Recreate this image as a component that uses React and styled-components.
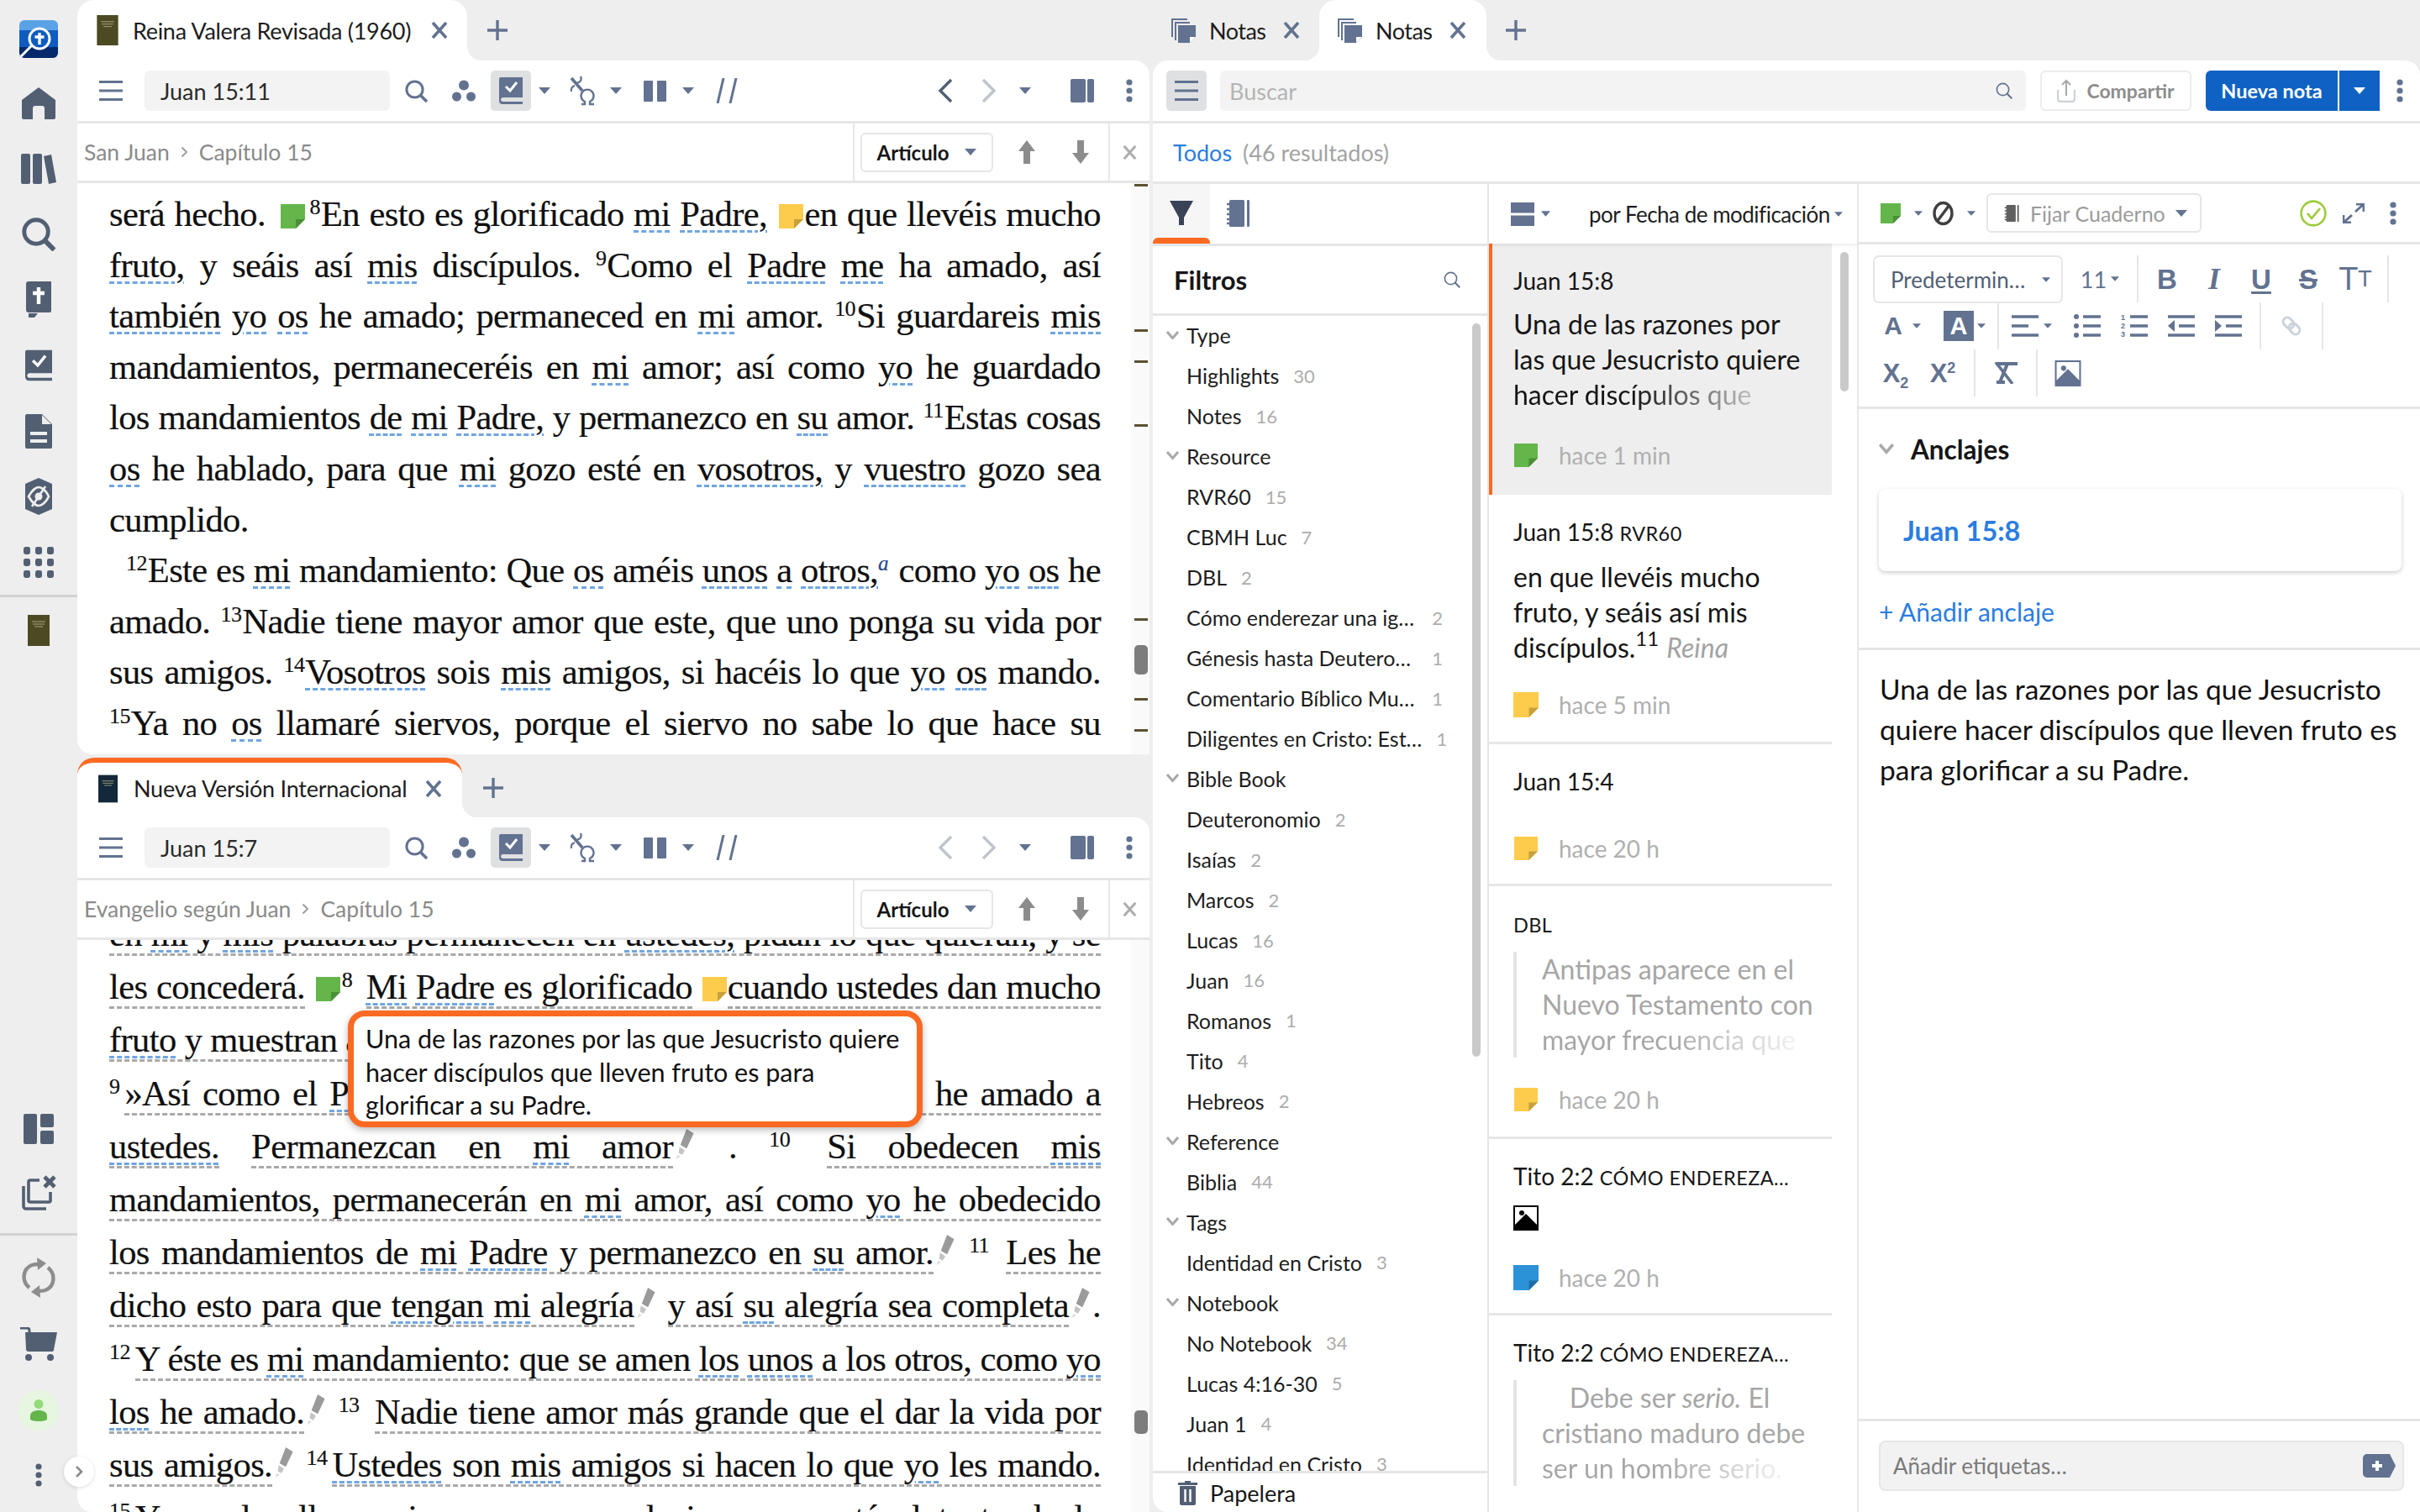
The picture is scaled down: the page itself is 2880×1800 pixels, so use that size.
import React from "react";
import styled, { createGlobalStyle } from "styled-components";

const UI = `Lato, "Noto Sans", "Liberation Sans", sans-serif`;
const SLATE = "#627290";
const NAVY = "#525f73";
const ORANGE = "#fb6a23";
const LINE = "#e6e6e6";
const BLUE = "#2a7de1";

const Global = createGlobalStyle`
  html, body { margin: 0; padding: 0; background: #eeeeee; }
  body { font-family: ${UI}; color: #161616; }
  * { box-sizing: border-box; }
  svg { display: block; flex: none; }
`;

const Shell = styled.div`
  width: 2880px;
  height: 1800px;
  display: flex;
  overflow: hidden;
  position: relative;
  background: #eeeeee;
`;

/* ---------- left rail ---------- */
const Rail = styled.nav`
  width: 92px;
  height: 1800px;
  flex: none;
  display: flex;
  flex-direction: column;
  align-items: center;
  padding-bottom: 6px;
`;
const LogoSlot = styled.div`
  height: 84px;
  padding-top: 24px;
`;
const RailItem = styled.div`
  height: ${(p) => p.$h || 78}px;
  width: 92px;
  display: flex;
  align-items: center;
  justify-content: center;
`;
const RailRule = styled.div`
  width: 92px;
  height: 3px;
  background: #d2d2d2;
  flex: none;
  margin: ${(p) => p.$mt || 0}px 0 ${(p) => p.$mb || 0}px;
`;
const RailSpacer = styled.div`
  flex: 1;
`;
const UserDot = styled.div`
  width: 48px;
  height: 48px;
  border-radius: 50%;
  background: #e6f6e0;
  display: flex;
  align-items: center;
  justify-content: center;
`;
const Collapse = styled.div`
  position: absolute;
  left: 76px;
  top: 1734px;
  width: 36px;
  height: 36px;
  border-radius: 50%;
  background: #fff;
  box-shadow: 0 1px 4px rgba(0, 0, 0, 0.14);
  display: flex;
  align-items: center;
  justify-content: center;
  z-index: 5;
`;

/* ---------- tabs ---------- */
const Column = styled.div`
  width: ${(p) => p.$w}px;
  flex: none;
  display: flex;
  flex-direction: column;
  height: 1800px;
  margin-right: ${(p) => p.$mr || 0}px;
`;
const Pane = styled.section`
  display: flex;
  flex-direction: column;
  height: ${(p) => p.$h}px;
  margin-top: ${(p) => p.$mt || 0}px;
  overflow: hidden;
`;
const TabStrip = styled.div`
  height: ${(p) => p.$h || 72}px;
  flex: none;
  display: flex;
  align-items: flex-end;
`;
const Tab = styled.div`
  height: ${(p) => p.$h || 72}px;
  display: flex;
  align-items: center;
  position: relative;
  padding-left: ${(p) => p.$pl || 23}px;
  width: ${(p) => p.$w}px;
  flex: none;
  font-size: 27px;
  color: #1d1d1d;
  border-radius: 20px 20px 0 0;
  background: ${(p) => (p.$on ? "#fff" : "transparent")};
  ${(p) => p.$accent && `border-top: 6px solid ${ORANGE}; padding-bottom: 4px;`}
  ${(p) =>
    p.$on &&
    `&::after {
      content: "";
      position: absolute;
      right: -18px;
      bottom: 0;
      width: 18px;
      height: 18px;
      background: radial-gradient(circle at 100% 0, transparent 18px, #fff 18.5px);
    }`}
  ${(p) =>
    p.$on &&
    p.$inner &&
    `&::before {
      content: "";
      position: absolute;
      left: -18px;
      bottom: 0;
      width: 18px;
      height: 18px;
      background: radial-gradient(circle at 0 0, transparent 18px, #fff 18.5px);
    }`}
`;
const TabLabel = styled.span`
  margin-left: ${(p) => p.$ml || 17}px;
  white-space: nowrap;
  letter-spacing: ${(p) => p.$ls || 0}px;
`;
const TabClose = styled.span`
  margin-left: ${(p) => p.$ml || 22}px;
  display: flex;
`;
const TabAdd = styled.span`
  margin-left: ${(p) => p.$ml || 23}px;
  align-self: center;
  display: flex;
`;
const Sheet = styled.div`
  flex: 1;
  min-height: 0;
  background: #fff;
  display: flex;
  flex-direction: column;
  border-radius: ${(p) => p.$radius || "0 18px 0 0"};
  position: relative;
`;

/* ---------- toolbars ---------- */
const Toolbar = styled.div`
  height: 75px;
  flex: none;
  display: flex;
  align-items: center;
  padding: 0 20px 0 ${(p) => p.$pl || 26}px;
  border-bottom: 3px solid ${LINE};
`;
const Slot = styled.div`
  flex: none;
  display: flex;
  align-items: center;
  justify-content: center;
  width: ${(p) => p.$w}px;
  height: 48px;
  margin-left: ${(p) => p.$ml || 0}px;
  ${(p) => p.$auto && "margin-left: auto;"}
  ${(p) => p.$on && "background: #dfe0e2; border-radius: 5px;"}
`;
const RefField = styled.div`
  width: 292px;
  height: 48px;
  margin-left: 26px;
  padding-left: 19px;
  border-radius: 6px;
  background: #f3f3f3;
  display: flex;
  align-items: center;
  font-size: 27px;
  color: #2a2a2a;
`;
const CrumbBar = styled.div`
  height: 71px;
  flex: none;
  display: flex;
  align-items: stretch;
  padding-left: 8px;
  border-bottom: 3px solid ${LINE};
  font-size: 26.5px;
  color: #8a8a8a;
`;
const Crumbs = styled.div`
  flex: 1;
  display: flex;
  align-items: center;
  gap: 13px;
`;
const CrumbTools = styled.div`
  display: flex;
  align-items: center;
  border-left: 2px solid ${LINE};
  padding-left: 7px;
  width: 353px;
`;
const ModeSelect = styled.div`
  width: 158px;
  height: 47px;
  border: 2px solid ${LINE};
  border-radius: 6px;
  display: flex;
  align-items: center;
  justify-content: center;
  gap: 19px;
  font-size: 24px;
  font-weight: 700;
  color: #161616;
`;
const CrumbClose = styled.div`
  width: 49px;
  align-self: stretch;
  margin-left: auto;
  border-left: 2px solid ${LINE};
  display: flex;
  align-items: center;
  justify-content: center;
`;

/* ---------- bible text ---------- */
const Reader = styled.div`
  flex: 1;
  min-height: 0;
  overflow: hidden;
  position: relative;
  padding: ${(p) => p.$top}px 0 0 38px;
`;
const TextFlow = styled.div`
  width: 1180px;
  margin-top: ${(p) => p.$mt || 0}px;
  font-family: "Liberation Serif", "Times New Roman", serif;
  font-size: 42.5px;
  letter-spacing: -0.6px;
  -webkit-text-stroke: 0.2px #101010;
  line-height: ${(p) => p.$lh}px;
  color: #101010;
`;
const Line = styled.div`
  height: ${(p) => p.$lh}px;
  overflow: visible;
  text-align: justify;
  text-align-last: ${(p) => (p.$free ? "left" : "justify")};
  text-indent: ${(p) => p.$indent || 0}px;
`;
const Ref = styled.span`
  text-decoration: underline dashed #6fa5e2 3px;
  text-underline-offset: 5px;
`;
const Marked = styled.span`
  border-bottom: 3px dashed #a9a9a9;
`;
const Verse = styled.sup`
  font-size: ${(p) => p.$s || 26}px;
  line-height: 0;
  vertical-align: 14px;
  margin-right: ${(p) => p.$mr || 1}px;
`;
const Foot = styled.sup`
  font-size: 25px;
  line-height: 0;
  vertical-align: 14px;
  font-style: italic;
  color: #1f4fa0;
  margin-right: 2px;
`;
const InlineIcon = styled.span`
  display: inline-block;
  vertical-align: ${(p) => p.$va || -3}px;
  margin: 0 ${(p) => p.$mx || 6}px;
  text-indent: 0;
`;
const ScrollTrack = styled.div`
  position: absolute;
  right: 0;
  top: 0;
  bottom: 0;
  width: 22px;
  background: #fafafa;
`;
const Tick = styled.div`
  position: absolute;
  left: 4px;
  right: 2px;
  top: ${(p) => p.$y}px;
  height: ${(p) => p.$hh || 3}px;
  background: ${(p) => p.$c || "#5b5232"};
  border-radius: ${(p) => (p.$hh ? 5 : 0)}px;
`;
const Tooltip = styled.div`
  position: absolute;
  left: 322px;
  top: 84px;
  width: 684px;
  height: 139px;
  border: 7px solid ${ORANGE};
  border-radius: 20px;
  background: #fff;
  box-shadow: 0 3px 8px rgba(0, 0, 0, 0.28);
  padding: 7px 0 0 14px;
  font-family: ${UI};
  font-size: 30.500px;
  line-height: 39.5px;
  color: #111;
  overflow: hidden;
  white-space: nowrap;
`;

/* ---------- notes ---------- */
const SearchField = styled.div`
  width: 959px;
  height: 48px;
  margin-left: 16px;
  border-radius: 6px;
  background: #f3f3f3;
  padding: 0 16px 0 11px;
  display: flex;
  align-items: center;
  justify-content: space-between;
  font-size: 27px;
  color: #b4b4b4;
`;
const ShareButton = styled.div`
  width: 180px;
  height: 48px;
  margin-left: 17px;
  border: 2px solid #ececec;
  border-radius: 6px;
  display: flex;
  align-items: center;
  justify-content: center;
  gap: 13px;
  font-size: 23px;
  font-weight: 700;
  color: #8d8d8d;
`;
const NewNote = styled.div`
  height: 48px;
  margin-left: 17px;
  display: flex;
  gap: 2px;
  background: #fff;
`;
const NewNoteMain = styled.div`
  width: 157px;
  background: #0f62c4;
  border-radius: 6px 0 0 6px;
  color: #fff;
  font-size: 23.5px;
  font-weight: 700;
  display: flex;
  align-items: center;
  justify-content: center;
`;
const NewNoteMore = styled.div`
  width: 48px;
  background: #0f62c4;
  display: flex;
  align-items: center;
  justify-content: center;
`;
const ResultsBar = styled.div`
  height: 72px;
  flex: none;
  display: flex;
  align-items: center;
  gap: 13px;
  padding-left: 24px;
  border-bottom: 3px solid ${LINE};
  font-size: 27px;
  color: #a3a3a3;
`;
const TodosLink = styled.span`
  color: ${BLUE};
`;
const Columns = styled.div`
  flex: 1;
  min-height: 0;
  display: flex;
`;
const FilterCol = styled.div`
  width: 400px;
  flex: none;
  display: flex;
  flex-direction: column;
  border-right: 2px solid ${LINE};
  position: relative;
`;
const FilterTabs = styled.div`
  height: 74px;
  flex: none;
  display: flex;
  border-bottom: 3px solid ${LINE};
`;
const FilterTab = styled.div`
  width: 68px;
  display: flex;
  align-items: center;
  justify-content: center;
  position: relative;
  padding-bottom: 2px;
  ${(p) =>
    p.$on &&
    `background: #f6f6f6;
    &::after {
      content: "";
      position: absolute;
      left: 0;
      right: 0;
      bottom: 0;
      height: 7px;
      background: ${ORANGE};
      border-radius: 6px 6px 0 0;
    }`}
`;
const FilterHead = styled.div`
  height: 82.500px;
  flex: none;
  display: flex;
  align-items: center;
  justify-content: space-between;
  padding: 0 32px 0 25px;
  font-size: 31px;
  font-weight: 700;
  border-bottom: 3px solid ${LINE};
`;
const FilterList = styled.div`
  flex: 1;
  min-height: 0;
  overflow: hidden;
  position: relative;
`;
const FilterRow = styled.div`
  height: 47.98px;
  display: flex;
  align-items: center;
  padding-left: 40px;
  padding-right: ${(p) => (p.$fill ? 53 : 0)}px;
  position: relative;
  font-size: 25px;
  color: #1d1d1d;
  white-space: nowrap;
`;
const FilterName = styled.span`
  ${(p) => p.$fill && "flex: 1;"}
`;
const FilterCount = styled.span`
  margin-left: 17px;
  font-size: 22px;
  color: #acacac;
`;
const Chevron = styled.span`
  position: absolute;
  left: 16px;
  top: 18px;
  display: flex;
`;
const ThinBar = styled.div`
  position: absolute;
  left: ${(p) => p.$x}px;
  top: ${(p) => p.$y}px;
  width: 10px;
  height: ${(p) => p.$h}px;
  border-radius: 5px;
  background: #c9c9c9;
`;
const TrashRow = styled.div`
  height: 49px;
  flex: none;
  display: flex;
  align-items: center;
  gap: 15px;
  padding-left: 30px;
  border-top: 3px solid ${LINE};
  font-size: 27px;
`;
const ListCol = styled.div`
  width: 440px;
  flex: none;
  display: flex;
  flex-direction: column;
  border-right: 2px solid ${LINE};
  position: relative;
  overflow: hidden;
`;
const SortBar = styled.div`
  height: 71px;
  flex: none;
  display: flex;
  align-items: center;
  padding-left: 26px;
  font-size: 26px;
  color: #1d1d1d;
  position: relative;
  z-index: 2;
  box-shadow: 0 2px 4px rgba(0, 0, 0, 0.08);
  white-space: nowrap;
`;
const SortLabel = styled.span`
  margin-left: 46px;
  letter-spacing: -0.5px;
`;
const NoteList = styled.div`
  width: 408px;
  flex: 1;
  min-height: 0;
  overflow: hidden;
`;
const NoteCard = styled.article`
  height: ${(p) => p.$h}px;
  display: flex;
  flex-direction: column;
  padding: 26px 0 0 ${(p) => (p.$on ? 25 : 29)}px;
  ${(p) =>
    p.$on
      ? `background: #eeeeee; border-left: 4px solid ${ORANGE};`
      : `border-bottom: 3px solid ${LINE};`}
`;
const NoteTitle = styled.div`
  font-size: 28px;
  line-height: 36px;
  white-space: nowrap;
  color: #161616;
`;
const Source = styled.span`
  font-size: 23.5px;
  letter-spacing: 0.4px;
  margin-left: ${(p) => (p.$flush ? 0 : 7)}px;
`;
const NoteBody = styled.div`
  margin-top: 13px;
  font-size: 32px;
  line-height: 42px;
  white-space: nowrap;
  color: #151515;
`;
const Fade = styled.span`
  background: linear-gradient(90deg, ${(p) => p.$from || "#151515"} 50%, ${(p) => p.$to || "#bdbdbd"} 100%);
  -webkit-background-clip: text;
  background-clip: text;
  color: transparent;
`;
const Quote = styled.blockquote`
  margin: ${(p) => p.$mt || 13}px 0 0 0;
  padding-left: 30px;
  border-left: 4px solid #e4e4e4;
  font-size: 32px;
  line-height: 42px;
  white-space: nowrap;
  color: #a6a6a6;
`;
const Faint = styled.i`
  color: #a6a6a6;
`;
const Ghost = styled.i`
  color: #a3a3a3;
`;
const NoteMeta = styled.div`
  margin-top: auto;
  margin-bottom: ${(p) => p.$mb || 27}px;
  display: flex;
  align-items: center;
  gap: 24px;
  font-size: 28px;
  color: #b0b0b0;
`;
const NotePicture = styled.div`
  margin-top: 15px;
`;

/* ---------- editor ---------- */
const Editor = styled.div`
  flex: 1;
  display: flex;
  flex-direction: column;
  min-width: 0;
`;
const MetaBar = styled.div`
  height: 72px;
  flex: none;
  display: flex;
  align-items: center;
  padding-left: 26px;
  border-bottom: 3px solid ${LINE};
`;
const Cell = styled.div`
  flex: none;
  width: ${(p) => p.$w}px;
  height: 100%;
  margin-left: ${(p) => p.$ml || 0}px;
  ${(p) => p.$auto && "margin-left: auto;"}
  display: flex;
  align-items: center;
  justify-content: center;
  gap: ${(p) => p.$gap || 0}px;
  font-family: "Liberation Sans", Arial, sans-serif;
  color: ${SLATE};
`;
const NotebookSelect = styled.div`
  width: 256px;
  height: 47px;
  margin-left: 13px;
  border: 2px solid ${LINE};
  border-radius: 6px;
  display: flex;
  align-items: center;
  padding: 0 15px 0 19px;
  font-size: 25px;
  color: #9b9b9b;
`;
const NotebookText = styled.span`
  flex: 1;
  margin-left: 12px;
`;
const FormatBox = styled.div`
  height: 196px;
  flex: none;
  padding-top: 13px;
  padding-left: 17px;
  border-bottom: 3px solid ${LINE};
`;
const FormatRow = styled.div`
  height: 56px;
  display: flex;
  align-items: stretch;
`;
const FontSelect = styled.div`
  width: 226px;
  height: 57px;
  border: 2px solid ${LINE};
  border-radius: 7px;
  display: flex;
  align-items: center;
  justify-content: space-between;
  padding: 0 13px 0 19px;
  font-size: 26px;
  color: ${NAVY};
`;
const VRule = styled.div`
  width: 2px;
  flex: none;
  background: ${LINE};
  margin-left: ${(p) => p.$ml || 0}px;
`;
const Glyph = styled.span`
  font-family: ${(p) => (p.$ui ? UI : p.$serif ? `"Liberation Serif", serif` : "inherit")};
  font-size: ${(p) => p.$s || 33}px;
  font-weight: ${(p) => (p.$thin ? 400 : 700)};
  font-style: ${(p) => (p.$it ? "italic" : "normal")};
  text-decoration: ${(p) => p.$deco || "none"};
  color: ${SLATE};
  line-height: 1;
  text-underline-offset: 3px;
`;
const HighlightA = styled.span`
  width: 36px;
  height: 36px;
  background: ${SLATE};
  color: #fff;
  font-size: 29px;
  font-weight: 700;
  display: flex;
  align-items: center;
  justify-content: center;
`;
const Sub = styled.sub`
  font-size: 18px;
  line-height: 0;
`;
const Top = styled.sup`
  font-size: 18px;
  line-height: 0;
`;
const AnchorBox = styled.div`
  height: 287px;
  flex: none;
  padding: 0 22px 0 24px;
  border-bottom: 3px solid ${LINE};
`;
const AnchorHead = styled.div`
  height: 95px;
  display: flex;
  align-items: center;
  gap: 20px;
  font-size: 31.500px;
  font-weight: 700;
`;
const AnchorCard = styled.div`
  height: 98px;
  border-radius: 8px;
  background: #fff;
  box-shadow: 0 2px 5px rgba(0, 0, 0, 0.2);
  padding-left: 29px;
  display: flex;
  align-items: center;
  font-size: 32.500px;
  font-weight: 700;
  color: ${BLUE};
`;
const AddAnchor = styled.div`
  margin-top: 30px;
  font-size: 30px;
  color: ${BLUE};
`;
const NoteText = styled.div`
  flex: 1;
  padding: 22px 0 0 25px;
  font-size: 33.500px;
  line-height: 48px;
  white-space: nowrap;
  color: #111;
`;
const TagFooter = styled.div`
  height: 111px;
  flex: none;
  padding: 23px 19px 0 24px;
  border-top: 3px solid ${LINE};
`;
const TagInput = styled.div`
  height: 60px;
  border: 2px solid ${LINE};
  border-radius: 8px;
  background: #f2f2f2;
  display: flex;
  align-items: center;
  justify-content: space-between;
  padding: 0 8px 0 15px;
  font-size: 26px;
  color: #7a7a7a;
`;

/* ---------- icons ---------- */
const Caret = ({ w = 14, h = 8, c = SLATE }) => (
  <svg width={w} height={h} viewBox="0 0 14 8">
    <path d="M0 0h14L7 8z" fill={c} />
  </svg>
);
const Close = ({ s = 20, c = SLATE }) => (
  <svg width={s} height={s} viewBox="0 0 20 20">
    <path d="M2 1l16 18M18 1L2 19" stroke={c} strokeWidth="3.6" />
  </svg>
);
const Plus = () => (
  <svg width="26" height="26" viewBox="0 0 26 26">
    <path d="M13 1v24M1 13h24" stroke={SLATE} strokeWidth="3.4" />
  </svg>
);
const Menu = () => (
  <svg width="28" height="24" viewBox="0 0 28 24">
    <path d="M0 1.5h28M0 12h28M0 22.5h28" stroke={SLATE} strokeWidth="3.2" />
  </svg>
);
const SearchIcon = ({ s = 27, c = SLATE, sw = 3 }) => (
  <svg width={s} height={s} viewBox="0 0 27 27">
    <circle cx="11.5" cy="11.5" r="9.6" fill="none" stroke={c} strokeWidth={sw} />
    <path d="M18 18l8 8" stroke={c} strokeWidth={sw + 0.6} />
  </svg>
);
const People = () => (
  <svg width="28" height="27" viewBox="0 0 28 27">
    <circle cx="14" cy="6.5" r="6" fill={SLATE} />
    <circle cx="5.5" cy="20" r="5.5" fill={SLATE} />
    <circle cx="22.5" cy="20" r="5.5" fill={SLATE} />
  </svg>
);
const CheckBook = ({ c = SLATE, w = 28, h = 32 }) => (
  <svg width={w} height={h} viewBox="0 0 28 32">
    <path d="M2 0h26v24H5a3 3 0 0 0-3 2 3 3 0 0 0 3 3h23v3H4a4 4 0 0 1-4-4V2a2 2 0 0 1 2-2z" fill={c} />
    <path d="M8 11l5 5 8-10" fill="none" stroke="#fff" strokeWidth="3" />
  </svg>
);
const Interlinear = () => (
  <svg width="32" height="36" viewBox="0 0 32 36">
    <g fill="none" stroke={SLATE}>
      <path d="M3 3l13 15" strokeWidth="3.6" />
      <path d="M14 1c2 5-1 7-5 8" strokeWidth="2.2" />
      <path d="M3 19c-1-4 1-6 4-7" strokeWidth="2.2" />
      <path d="M15 34h4v-3a7.500 7.500 0 1 1 6 0v3h5" strokeWidth="2.4" />
    </g>
  </svg>
);
const ColumnsIcon = () => (
  <svg width="27" height="25" viewBox="0 0 27 25">
    <rect width="11" height="25" rx="1" fill={SLATE} />
    <rect x="16" width="11" height="25" rx="1" fill={SLATE} />
  </svg>
);
const Slashes = () => (
  <svg width="26" height="30" viewBox="0 0 26 30">
    <path d="M9 0L2 30M24 0L17 30" stroke={SLATE} strokeWidth="3" />
  </svg>
);
const Angle = ({ dir = "left", c = NAVY }) => (
  <svg width="18" height="30" viewBox="0 0 18 30">
    <path d={dir === "left" ? "M16 2L3 15l13 13" : "M2 2l13 13L2 28"} fill="none" stroke={c} strokeWidth="3.4" />
  </svg>
);
const Split = () => (
  <svg width="28" height="28" viewBox="0 0 28 28">
    <rect width="18" height="28" rx="2" fill={SLATE} />
    <rect x="20" width="8" height="28" rx="2" fill={SLATE} />
  </svg>
);
const Kebab = ({ c = SLATE, h = 28 }) => (
  <svg width="8" height={h} viewBox="0 0 8 28">
    <circle cx="4" cy="4" r="3.6" fill={c} />
    <circle cx="4" cy="14" r="3.6" fill={c} />
    <circle cx="4" cy="24" r="3.6" fill={c} />
  </svg>
);
const Arrow = ({ up }) => (
  <svg width="20" height="28" viewBox="0 0 20 28">
    <path d={up ? "M10 0l10 13h-6v15H6V13H0z" : "M10 28L0 15h6V0h8v15h6z"} fill="#8c8c8c" />
  </svg>
);
const StickyNote = ({ c, fold, w = 29, h = 29 }) => (
  <svg width={w} height={h} viewBox="0 0 29 29">
    <path d="M0 0h29v18L18 29H0z" fill={c} />
    <path d="M29 18H18v11z" fill={fold} />
  </svg>
);
const green = { c: "#64b64b", fold: "#4a8f36" };
const yellow = { c: "#fdcc4c", fold: "#c7a13a" };
const azure = { c: "#2c92d8", fold: "#1e6ea6" };
const Pen = () => (
  <svg width="24" height="38" viewBox="0 0 22 36">
    <path d="M13 1l8 5-8 17-7-4z" fill="#9a9a9a" />
    <path d="M5 21l6 4-3 5-4-2z" fill="#c4c4c4" />
    <path d="M3 30l3 2-5 3z" fill="#dadada" />
  </svg>
);
const BookThumb = ({ c = "#4b4a23", w = 26, h = 37 }) => (
  <svg width={w} height={h} viewBox="0 0 26 37">
    <rect width="26" height="37" fill={c} />
    <path d="M5 8h16M6 11h14M8 14h10" stroke="#b5b28a" strokeWidth="0.9" />
  </svg>
);
const NotesTabIcon = () => (
  <svg width="29" height="29" viewBox="0 0 29 29">
    <path d="M0 0h19v2H2v20H0zM4 4h18v2H6v20H4z" fill={SLATE} />
    <path d="M8 8h21v14l-7 7H8z" fill={SLATE} />
    <path d="M29 22h-7v7z" fill="#fff" />
  </svg>
);
const Funnel = () => (
  <svg width="28" height="29" viewBox="0 0 28 29">
    <path d="M0 0h28l-11 20v9h-6v-9z" fill="#3a4356" />
  </svg>
);
const Notebook = ({ c = SLATE, w = 28, h = 32 }) => (
  <svg width={w} height={h} viewBox="0 0 28 32">
    <rect x="3" width="18" height="32" rx="1.5" fill={c} />
    <rect x="24" width="3" height="32" rx="1" fill={c} />
    <path d="M0 5h5M0 11h5M0 17h5M0 23h5M0 28h5" stroke={c} strokeWidth="2.4" />
  </svg>
);
const Chev = ({ s = 15, c = "#a9a9a9", sw = 3 }) => (
  <svg width={s} height={s * 0.7} viewBox="0 0 15 10.5">
    <path d="M1 1l6.5 7.5L14 1" fill="none" stroke={c} strokeWidth={sw} />
  </svg>
);
const Rows = () => (
  <svg width="28" height="28" viewBox="0 0 28 28">
    <rect width="28" height="12.5" fill={SLATE} />
    <rect y="15.5" width="28" height="12.5" fill={SLATE} />
  </svg>
);
const Trash = () => (
  <svg width="23" height="29" viewBox="0 0 23 29">
    <path d="M8 0h7v2h8v3H0V2h8zM2 6h19v21a2 2 0 0 1-2 2H4a2 2 0 0 1-2-2z" fill={NAVY} />
    <path d="M8.5 10v15M14.5 10v15" stroke="#fff" strokeWidth="2.4" />
  </svg>
);
const PictureIcon = ({ c = "#000", w = 30, h = 30 }) => (
  <svg width={w} height={h} viewBox="0 0 30 30">
    <rect x="1" y="1" width="28" height="28" fill="#fff" stroke={c} strokeWidth="2" />
    <circle cx="10" cy="9" r="3" fill={c} />
    <path d="M1 29V24L15 10l14 14v5z" fill={c} />
  </svg>
);
const Upload = () => (
  <svg width="22" height="28" viewBox="0 0 22 28">
    <path d="M11 20V2M6 7l5-5 5 5" fill="none" stroke="#a8a8a8" strokeWidth="2" />
    <path d="M1 13v11a3 3 0 0 0 3 3h14a3 3 0 0 0 3-3V13" fill="none" stroke="#ccd1d9" strokeWidth="2.4" />
  </svg>
);
const NoSign = () => (
  <svg width="25" height="30" viewBox="0 0 25 30">
    <ellipse cx="12.5" cy="15" rx="10.5" ry="12.5" fill="none" stroke="#3f3f3f" strokeWidth="3.4" />
    <path d="M5 25L20 5" stroke="#3f3f3f" strokeWidth="3.4" />
  </svg>
);
const SavedCheck = () => (
  <svg width="32" height="32" viewBox="0 0 32 32">
    <circle cx="16" cy="16" r="14.4" fill="none" stroke="#9ccb3b" strokeWidth="2.6" />
    <path d="M9 16l5 6 10-12" fill="none" stroke="#9ccb3b" strokeWidth="2.6" />
  </svg>
);
const Expand = () => (
  <svg width="26" height="24" viewBox="0 0 26 24">
    <path d="M16 1h9v9M25 1L15 10M10 23H1v-9M1 23l10-9" fill="none" stroke={SLATE} strokeWidth="2.8" />
  </svg>
);
const ListLines = ({ bullets, numbers }) => (
  <svg width="32" height="30" viewBox="0 0 32 30">
    {bullets &&
      [4, 15, 26].map((y) => <circle key={y} cx="3" cy={y} r="3" fill={SLATE} />)}
    {numbers && (
      <g fontFamily="Liberation Sans" fontSize="9" fontWeight="700" fill={SLATE}>
        <text x="0" y="8">1</text>
        <text x="0" y="18">2</text>
        <text x="0" y="28">3</text>
      </g>
    )}
    <path d="M11 4h21M11 15h21M11 26h21" stroke={SLATE} strokeWidth="3.6" />
  </svg>
);
const AlignLines = () => (
  <svg width="32" height="28" viewBox="0 0 32 28">
    <path d="M0 3h32M0 14h20M0 25h32" stroke={SLATE} strokeWidth="3.6" />
  </svg>
);
const Indent = ({ out }) => (
  <svg width="32" height="28" viewBox="0 0 32 28">
    <path d="M0 3h32M0 25h32M13 14h19" stroke={SLATE} strokeWidth="3.6" />
    <path d={out ? "M0 14l8-7v14z" : "M8 14L0 7v14z"} fill={SLATE} />
  </svg>
);
const LinkIcon = () => (
  <svg width="26" height="26" viewBox="0 0 26 26">
    <g fill="none" stroke="#ccd2dc" strokeWidth="3" transform="rotate(-45 13 13)">
      <rect x="8" y="1" width="10" height="14" rx="5" />
      <rect x="8" y="11" width="10" height="14" rx="5" />
    </g>
  </svg>
);
const ClearFormat = () => (
  <svg width="30" height="26" viewBox="0 0 30 26">
    <path d="M3 2h26" stroke={SLATE} strokeWidth="4" />
    <path d="M3 0l20 26" stroke={SLATE} strokeWidth="3.6" />
    <path d="M17 2L8 24M4 24h10" stroke={SLATE} strokeWidth="4" fill="none" />
  </svg>
);
const TagAdd = () => (
  <svg width="39" height="28" viewBox="0 0 39 28">
    <path d="M5 0h27l7 14-7 14H5a5 5 0 0 1-5-5V5a5 5 0 0 1 5-5z" fill={SLATE} />
    <path d="M17 8v12M11 14h12" stroke="#fff" strokeWidth="4" />
  </svg>
);

const Logo = () => (
  <svg width="46" height="45" viewBox="0 0 46 45">
    <defs>
      <clipPath id="logoClip">
        <rect width="46" height="45" rx="6" />
      </clipPath>
    </defs>
    <g clipPath="url(#logoClip)">
      <rect width="46" height="12" fill="#5aa2e6" />
      <rect y="12" width="46" height="20" fill="#0e5cc0" />
      <rect y="32" width="46" height="13" fill="#04286c" />
      <path d="M15 30L1 44" stroke="#fff" strokeWidth="3" />
    </g>
    <circle cx="24" cy="22" r="12" fill="#0e5cc0" stroke="#fff" strokeWidth="3" />
    <path d="M24 15v14M18.5 20h11" stroke="#fff" strokeWidth="3.4" />
  </svg>
);
const HomeIcon = () => (
  <svg width="40" height="38" viewBox="0 0 40 38">
    <path d="M20 0l20 15v21a2 2 0 0 1-2 2H27V25a3 3 0 0 0-3-3h-8a3 3 0 0 0-3 3v13H2a2 2 0 0 1-2-2V15z" fill={NAVY} />
  </svg>
);
const LibraryIcon = () => (
  <svg width="42" height="37" viewBox="0 0 42 37">
    <rect width="11" height="36" rx="2" fill={NAVY} />
    <rect x="14" width="11" height="36" rx="2" fill={NAVY} />
    <path d="M27 3l9-2 6 33-9 2z" fill={NAVY} />
  </svg>
);
const BiblePlus = () => (
  <svg width="30" height="44" viewBox="0 0 30 44">
    <path d="M3 0h27v35a2 2 0 0 1-2 2H3a3 3 0 0 1-3-3V3a3 3 0 0 1 3-3z" fill={NAVY} />
    <path d="M3 38h11l-4 5H3z" fill={NAVY} />
    <path d="M15 7v20M8 14h14" stroke="#fff" strokeWidth="4.4" />
  </svg>
);
const DocIcon = () => (
  <svg width="32" height="41" viewBox="0 0 32 41">
    <path d="M2 0h18l12 12v27a2 2 0 0 1-2 2H2a2 2 0 0 1-2-2V2a2 2 0 0 1 2-2z" fill={NAVY} />
    <path d="M20 1v11h11z" fill="#eee" />
    <path d="M6 23h20M6 32h20" stroke="#eee" strokeWidth="4" />
  </svg>
);
const HexEye = () => (
  <svg width="32" height="44" viewBox="0 0 32 44">
    <path d="M16 0l16 7v30l-16 7-16-7V7z" fill={NAVY} />
    <path d="M4 22c5-9 10-11 12-11s8 2 12 11c-4 9-10 11-12 11s-7-2-12-11z" fill="none" stroke="#eee" strokeWidth="2.6" />
    <circle cx="16" cy="22" r="4.5" fill="#eee" />
    <path d="M24 10L8 34" stroke="#eee" strokeWidth="2.6" />
  </svg>
);
const DotGrid = () => (
  <svg width="36" height="37" viewBox="0 0 36 37">
    {[0, 14, 28].map((y) =>
      [0, 14, 28].map((x) => <rect key={`${x}-${y}`} x={x} y={y} width="8" height="9" rx="2.4" fill={NAVY} />)
    )}
  </svg>
);
const LayoutIcon = () => (
  <svg width="36" height="36" viewBox="0 0 36 36">
    <rect width="16" height="36" rx="2" fill={NAVY} />
    <rect x="20" width="16" height="16" rx="2" fill={NAVY} />
    <rect x="20" y="20" width="16" height="16" rx="2" fill={NAVY} />
  </svg>
);
const CloseAll = () => (
  <svg width="42" height="42" viewBox="0 0 42 42">
    <path d="M22 6H11a2 2 0 0 0-2 2v22a2 2 0 0 0 2 2h22a2 2 0 0 0 2-2V20" fill="none" stroke={NAVY} strokeWidth="3.6" />
    <path d="M3 13v24a3 3 0 0 0 3 3h24" fill="none" stroke={NAVY} strokeWidth="3.6" />
    <path d="M28 2l12 12M40 2L28 14" stroke={NAVY} strokeWidth="4.6" />
  </svg>
);
const SyncIcon = () => (
  <svg width="40" height="48" viewBox="0 0 40 48">
    <path d="M9 36C0 29 0 14 12 9c3-1 7-1 9-1" fill="none" stroke="#8d8d8d" strokeWidth="4.4" />
    <path d="M18 0l11 7-10 8z" fill="#8d8d8d" />
    <path d="M31 12c9 7 9 22-3 27-3 1-7 1-9 1" fill="none" stroke="#8d8d8d" strokeWidth="4.4" />
    <path d="M22 48l-11-7 10-8z" fill="#8d8d8d" />
  </svg>
);
const CartIcon = () => (
  <svg width="44" height="40" viewBox="0 0 44 40">
    <path d="M0 1h8c2 0 3 1 3 3v2" fill="none" stroke={NAVY} strokeWidth="3" />
    <path d="M6 6h38l-4 21a2 2 0 0 1-2 2H10a3 3 0 0 1-3-3z" fill={NAVY} />
    <circle cx="10" cy="36" r="4" fill={NAVY} />
    <circle cx="36" cy="36" r="4" fill={NAVY} />
  </svg>
);
const UserIcon = () => (
  <svg width="20" height="26" viewBox="0 0 20 26">
    <circle cx="10" cy="5.5" r="5.5" fill="#92da7a" />
    <path d="M0 20c0-5 4-7 10-7s10 2 10 7v3c0 2-4 3-10 3S0 25 0 23z" fill="#64b64b" />
  </svg>
);

/* ---------- data ---------- */
const filters = [
  ["Type"], ["Highlights", 30], ["Notes", 16],
  ["Resource"], ["RVR60", 15], ["CBMH Luc", 7], ["DBL", 2],
  ["Cómo enderezar una ig…", 2, true], ["Génesis hasta Deutero…", 1, true],
  ["Comentario Bíblico Mu…", 1, true], ["Diligentes en Cristo: Est…", 1, true],
  ["Bible Book"], ["Deuteronomio", 2], ["Isaías", 2], ["Marcos", 2], ["Lucas", 16],
  ["Juan", 16], ["Romanos", 1], ["Tito", 4], ["Hebreos", 2],
  ["Reference"], ["Biblia", 44],
  ["Tags"], ["Identidad en Cristo", 3],
  ["Notebook"], ["No Notebook", 34], ["Lucas 4:16-30", 5], ["Juan 1", 4], ["Identidad en Cristo", 3],
];

function PaneToolbar({ reference, dimBack }) {
  return (
    <Toolbar>
      <Menu />
      <RefField>{reference}</RefField>
      <Slot $w={27} $ml={18}><SearchIcon /></Slot>
      <Slot $w={28} $ml={29}><People /></Slot>
      <Slot $w={48} $ml={18} $on><CheckBook /></Slot>
      <Slot $w={14} $ml={9}><Caret /></Slot>
      <Slot $w={32} $ml={22}><Interlinear /></Slot>
      <Slot $w={14} $ml={17}><Caret /></Slot>
      <Slot $w={27} $ml={26}><ColumnsIcon /></Slot>
      <Slot $w={14} $ml={19}><Caret /></Slot>
      <Slot $w={26} $ml={26}><Slashes /></Slot>
      <Slot $w={18} $auto><Angle c={dimBack ? "#bfc4cc" : NAVY} /></Slot>
      <Slot $w={18} $ml={34}><Angle dir="right" c="#bfc4cc" /></Slot>
      <Slot $w={14} $ml={27}><Caret /></Slot>
      <Slot $w={28} $ml={47}><Split /></Slot>
      <Slot $w={8} $ml={38}><Kebab /></Slot>
    </Toolbar>
  );
}

function PaneCrumbs({ book }) {
  return (
    <CrumbBar>
      <Crumbs>
        <span>{book}</span>
        <svg width="9" height="14" viewBox="0 0 9 14">
          <path d="M1.5 1.5L7 7l-5.500 5.500" fill="none" stroke="#9a9a9a" strokeWidth="1.800" />
        </svg>
        <span>Capítulo 15</span>
      </Crumbs>
      <CrumbTools>
        <ModeSelect>
          Artículo <Caret />
        </ModeSelect>
        <Slot $w={20} $ml={30}><Arrow up /></Slot>
        <Slot $w={20} $ml={44}><Arrow /></Slot>
        <CrumbClose><Close s={17} c="#adadad" /></CrumbClose>
      </CrumbTools>
    </CrumbBar>
  );
}

function App() {
  return (
    <>
      <Global />
      <Shell>
        <Rail>
          <LogoSlot><Logo /></LogoSlot>
          <RailItem><HomeIcon /></RailItem>
          <RailItem><LibraryIcon /></RailItem>
          <RailItem><SearchIcon s={40} c={NAVY} sw={3.300} /></RailItem>
          <RailItem><BiblePlus /></RailItem>
          <RailItem><CheckBook c={NAVY} w={32} h={40} /></RailItem>
          <RailItem><DocIcon /></RailItem>
          <RailItem><HexEye /></RailItem>
          <RailItem><DotGrid /></RailItem>
          <RailRule />
          <RailItem $h={78}><BookThumb /></RailItem>
          <RailSpacer />
          <RailItem $h={76}><LayoutIcon /></RailItem>
          <RailItem $h={76}><CloseAll /></RailItem>
          <RailRule $mt={10} $mb={11} />
          <RailItem $h={78}><SyncIcon /></RailItem>
          <RailItem $h={80}><CartIcon /></RailItem>
          <RailItem $h={78}><UserDot><UserIcon /></UserDot></RailItem>
          <RailItem $h={76}><Kebab c={NAVY} /></RailItem>
        </Rail>
        <Collapse>
          <svg width="10" height="16" viewBox="0 0 10 16">
            <path d="M2 2l6 6-6 6" fill="none" stroke="#8a8a8a" strokeWidth="2.600" />
          </svg>
        </Collapse>

        <Column $w={1276} $mr={4}>
          <Pane $h={898}>
            <TabStrip>
              <Tab $on $w={464}>
                <BookThumb w={26} h={36} />
                <TabLabel $ls={-0.3}>Reina Valera Revisada (1960)</TabLabel>
                <TabClose $ml={24}><Close /></TabClose>
              </Tab>
              <TabAdd><Plus /></TabAdd>
            </TabStrip>
            <Sheet $radius="0 18px 18px 18px">
              <PaneToolbar reference="Juan 15:11" />
              <PaneCrumbs book="San Juan" />
              <Reader $top={7}>
                <TextFlow $lh={60.6}>
                  <Line $lh={60.6}>será hecho. <InlineIcon><StickyNote {...green} /></InlineIcon><Verse>8</Verse>En esto es glorificado <Ref>mi</Ref> <Ref>Padre,</Ref> <InlineIcon $mx={2}><StickyNote {...yellow} /></InlineIcon>en que llevéis mucho</Line>
                  <Line $lh={60.6}><Ref>fruto,</Ref> y seáis así <Ref>mis</Ref> discípulos. <Verse>9</Verse>Como el <Ref>Padre</Ref> <Ref>me</Ref> ha amado, así</Line>
                  <Line $lh={60.6}><Ref>también</Ref> <Ref>yo</Ref> <Ref>os</Ref> he amado; permaneced en <Ref>mi</Ref> amor. <Verse>10</Verse>Si guardareis <Ref>mis</Ref></Line>
                  <Line $lh={60.6}>mandamientos, permaneceréis en <Ref>mi</Ref> amor; así como <Ref>yo</Ref> he guardado</Line>
                  <Line $lh={60.6}>los mandamientos <Ref>de</Ref> <Ref>mi</Ref> <Ref>Padre,</Ref> y permanezco en <Ref>su</Ref> amor. <Verse>11</Verse>Estas cosas</Line>
                  <Line $lh={60.6}><Ref>os</Ref> he hablado, para que <Ref>mi</Ref> gozo esté en <Ref>vosotros,</Ref> y <Ref>vuestro</Ref> gozo sea</Line>
                  <Line $lh={60.6} $free>cumplido.</Line>
                  <Line $lh={60.6} $indent={20}><Verse>12</Verse>Este es <Ref>mi</Ref> mandamiento: Que <Ref>os</Ref> améis <Ref>unos</Ref> <Ref>a</Ref> <Ref>otros,</Ref><Foot>a</Foot> como <Ref>yo</Ref> <Ref>os</Ref> he</Line>
                  <Line $lh={60.6}>amado. <Verse>13</Verse>Nadie tiene mayor amor que este, que uno ponga su vida por</Line>
                  <Line $lh={60.6}>sus amigos. <Verse>14</Verse><Ref>Vosotros</Ref> sois <Ref>mis</Ref> amigos, si hacéis lo que <Ref>yo</Ref> <Ref>os</Ref> mando.</Line>
                  <Line $lh={60.6}><Verse>15</Verse>Ya no <Ref>os</Ref> llamaré siervos, porque el siervo no sabe lo que hace su</Line>
                </TextFlow>
                <ScrollTrack>
                  <Tick $y={1} />
                  <Tick $y={174} />
                  <Tick $y={211} />
                  <Tick $y={287} />
                  <Tick $y={518} />
                  <Tick $y={550} $hh={35} $c="#7d7d7d" />
                  <Tick $y={613} />
                  <Tick $y={650} />
                </ScrollTrack>
              </Reader>
            </Sheet>
          </Pane>

          <Pane $h={898} $mt={4}>
            <TabStrip $h={71}>
              <Tab $on $accent $w={458} $h={71} $pl={25}>
                <BookThumb c="#13293a" w={23} h={36} />
                <TabLabel $ml={19} $ls={-0.25}>Nueva Versión Internacional</TabLabel>
                <TabClose $ml={22}><Close /></TabClose>
              </Tab>
              <TabAdd $ml={24}><Plus /></TabAdd>
            </TabStrip>
            <Sheet $radius="0 18px 0 18px">
              <PaneToolbar reference="Juan 15:7" dimBack />
              <PaneCrumbs book="Evangelio según Juan" />
              <Reader $top={0}>
                <TextFlow $lh={63.2} $mt={-39}>
                  <Line $lh={63.2}><Marked>en <Ref>mí</Ref> y <Ref>mis</Ref> palabras permanecen en <Ref>ustedes,</Ref> pidan lo que quieran, y se</Marked></Line>
                  <Line $lh={63.2}><Marked>les concederá.</Marked> <InlineIcon $mx={2}><StickyNote {...green} /></InlineIcon><Verse $mr={6}>8</Verse> <Marked><Ref>Mi</Ref> <Ref>Padre</Ref> es glorificado</Marked> <InlineIcon $mx={1}><StickyNote {...yellow} /></InlineIcon><Marked>cuando ustedes dan mucho</Marked></Line>
                  <Line $lh={63.2} $free><Marked><Ref>fruto</Ref> y muestran así que son mis discípulos.</Marked></Line>
                  <Line $lh={63.2}><Verse $mr={6}>9</Verse><Marked>»Así como el <Ref>Padre</Ref> me ha amado a mí, también yo los he amado a</Marked></Line>
                  <Line $lh={63.2}><Marked><Ref>ustedes.</Ref></Marked> <Marked>Permanezcan en <Ref>mi</Ref> amor</Marked><InlineIcon $mx={2} $va={-2}><Pen /></InlineIcon> . <Verse $mr={6}>10</Verse> <Marked>Si obedecen <Ref>mis</Ref></Marked></Line>
                  <Line $lh={63.2}><Marked>mandamientos, permanecerán en <Ref>mi</Ref> amor, así como <Ref>yo</Ref> he obedecido</Marked></Line>
                  <Line $lh={63.2}><Marked>los mandamientos de <Ref>mi</Ref> <Ref>Padre</Ref> y permanezco en <Ref>su</Ref> amor.</Marked><InlineIcon $mx={2} $va={-2}><Pen /></InlineIcon> <Verse $mr={6}>11</Verse> <Marked>Les he</Marked></Line>
                  <Line $lh={63.2}><Marked>dicho esto para que <Ref>tengan</Ref> <Ref>mi</Ref> alegría</Marked><InlineIcon $mx={2} $va={-2}><Pen /></InlineIcon> <Marked>y así <Ref>su</Ref> alegría sea completa</Marked><InlineIcon $mx={2} $va={-2}><Pen /></InlineIcon>.</Line>
                  <Line $lh={63.2}><Verse $mr={6}>12</Verse><Marked>Y éste es <Ref>mi</Ref> mandamiento: que se amen <Ref>los</Ref> <Ref>unos</Ref> a los otros, como <Ref>yo</Ref></Marked></Line>
                  <Line $lh={63.2}><Marked><Ref>los</Ref> he amado.</Marked><InlineIcon $mx={2} $va={-2}><Pen /></InlineIcon> <Verse $mr={6}>13</Verse> <Marked>Nadie tiene amor más grande que el dar la vida por</Marked></Line>
                  <Line $lh={63.2}><Marked>sus amigos.</Marked><InlineIcon $mx={2} $va={-2}><Pen /></InlineIcon> <Verse $mr={6}>14</Verse><Marked><Ref>Ustedes</Ref> son <Ref>mis</Ref> amigos si hacen lo que <Ref>yo</Ref> les mando.</Marked></Line>
                  <Line $lh={63.2}><Verse $mr={6}>15</Verse>Ya no los llamo siervos, porque el siervo no está al tanto de lo</Line>
                </TextFlow>
                <ScrollTrack>
                  <Tick $y={560} $hh={28} $c="#7d7d7d" />
                </ScrollTrack>
                <Tooltip>
                  Una de las razones por las que Jesucristo quiere<br />
                  hacer discípulos que lleven fruto es para<br />
                  glorificar a su Padre.
                </Tooltip>
              </Reader>
            </Sheet>
          </Pane>
        </Column>

        <Column $w={1508}>
          <TabStrip>
            <Tab $w={198} $pl={22}>
              <NotesTabIcon />
              <TabLabel $ml={16} $ls={-0.5}>Notas</TabLabel>
              <TabClose $ml={20}><Close /></TabClose>
            </Tab>
            <Tab $on $inner $w={199} $pl={22}>
              <NotesTabIcon />
              <TabLabel $ml={16} $ls={-0.5}>Notas</TabLabel>
              <TabClose $ml={20}><Close /></TabClose>
            </Tab>
            <TabAdd $ml={22}><Plus /></TabAdd>
          </TabStrip>
          <Sheet $radius="18px 18px 0 18px">
            <Toolbar $pl={16}>
              <Slot $w={48} $on><Menu /></Slot>
              <SearchField>
                Buscar
                <SearchIcon s={20} sw={2.200} />
              </SearchField>
              <ShareButton><Upload /> Compartir</ShareButton>
              <NewNote>
                <NewNoteMain>Nueva nota</NewNoteMain>
                <NewNoteMore><Caret c="#fff" /></NewNoteMore>
              </NewNote>
              <Slot $w={8} $ml={20}><Kebab /></Slot>
            </Toolbar>
            <ResultsBar>
              <TodosLink>Todos</TodosLink>
              <span>(46 resultados)</span>
            </ResultsBar>
            <Columns>
              <FilterCol>
                <FilterTabs>
                  <FilterTab $on><Funnel /></FilterTab>
                  <FilterTab><Notebook /></FilterTab>
                </FilterTabs>
                <FilterHead>
                  Filtros
                  <SearchIcon s={20} sw={2.200} />
                </FilterHead>
                <FilterList>
                  {filters.map(([name, count, fill], i) => (
                    <FilterRow key={i} $fill={fill}>
                      {count === undefined && <Chevron><Chev /></Chevron>}
                      <FilterName $fill={fill}>{name}</FilterName>
                      {count !== undefined && <FilterCount>{count}</FilterCount>}
                    </FilterRow>
                  ))}
                  <ThinBar $x={380} $y={9} $h={873} />
                </FilterList>
                <TrashRow><Trash /> Papelera</TrashRow>
              </FilterCol>

              <ListCol>
                <SortBar>
                  <Rows />
                  <Slot $w={12} $ml={7}><Caret w={11} h={7} /></Slot>
                  <SortLabel>por Fecha de modificación</SortLabel>
                  <Slot $w={10} $ml={5}><Caret w={10} h={6} /></Slot>
                </SortBar>
                <NoteList>
                  <NoteCard $on $h={299}>
                    <NoteTitle>Juan 15:8</NoteTitle>
                    <NoteBody>
                      Una de las razones por<br />
                      las que Jesucristo quiere<br />
                      <Fade>hacer discípulos que</Fade>
                    </NoteBody>
                    <NoteMeta $mb={30}><StickyNote {...green} w={30} h={28} /> hace 1 min</NoteMeta>
                  </NoteCard>
                  <NoteCard $h={297}>
                    <NoteTitle>Juan 15:8<Source>RVR60</Source></NoteTitle>
                    <NoteBody>
                      en que llevéis mucho<br />
                      fruto, y seáis así mis<br />
                      discípulos.<Verse $s={24}>11</Verse> <Ghost>Reina</Ghost>
                    </NoteBody>
                    <NoteMeta><StickyNote {...yellow} w={30} h={30} /> hace 5 min</NoteMeta>
                  </NoteCard>
                  <NoteCard $h={169}>
                    <NoteTitle>Juan 15:4</NoteTitle>
                    <NoteMeta $mb={25}><StickyNote {...yellow} w={30} h={28} /> hace 20 h</NoteMeta>
                  </NoteCard>
                  <NoteCard $h={301}>
                    <NoteTitle><Source $flush>DBL</Source></NoteTitle>
                    <Quote $mt={14}>
                      Antipas aparece en el<br />
                      Nuevo Testamento con<br />
                      <Fade $from="#a6a6a6" $to="#f2f2f2">mayor frecuencia que</Fade>
                    </Quote>
                    <NoteMeta><StickyNote {...yellow} w={30} h={28} /> hace 20 h</NoteMeta>
                  </NoteCard>
                  <NoteCard $h={210}>
                    <NoteTitle>Tito 2:2<Source>CÓMO ENDEREZA…</Source></NoteTitle>
                    <NotePicture><PictureIcon /></NotePicture>
                    <NoteMeta $mb={25}><StickyNote {...azure} w={30} h={30} /> hace 20 h</NoteMeta>
                  </NoteCard>
                  <NoteCard $h={240}>
                    <NoteTitle>Tito 2:2<Source>CÓMO ENDEREZA…</Source></NoteTitle>
                    <Quote>
                      &nbsp;&nbsp;&nbsp;&nbsp;Debe ser <Faint>serio.</Faint> El<br />
                      cristiano maduro debe<br />
                      <Fade $from="#a6a6a6" $to="#f2f2f2">ser un hombre serio.</Fade>
                    </Quote>
                  </NoteCard>
                </NoteList>
                <ThinBar $x={418} $y={81} $h={166} />
              </ListCol>

              <Editor>
                <MetaBar>
                  <StickyNote {...green} w={24} h={24} />
                  <Cell $w={10} $ml={16}><Caret w={10} h={6} /></Cell>
                  <Cell $w={25} $ml={12}><NoSign /></Cell>
                  <Cell $w={10} $ml={16}><Caret w={10} h={6} /></Cell>
                  <NotebookSelect>
                    <Notebook c="#606060" w={19} h={20} />
                    <NotebookText>Fijar Cuaderno</NotebookText>
                    <Caret />
                  </NotebookSelect>
                  <Cell $w={32} $ml={117}><SavedCheck /></Cell>
                  <Cell $w={26} $ml={19}><Expand /></Cell>
                  <Cell $w={8} $ml={30}><Kebab /></Cell>
                </MetaBar>
                <FormatBox>
                  <FormatRow>
                    <FontSelect>Predetermin… <Caret w={10} h={6} /></FontSelect>
                    <Cell $w={88} $gap={5}><Glyph $thin $ui $s={27}>11</Glyph><Caret w={10} h={6} /></Cell>
                    <VRule />
                    <Cell $w={56} $ml={6}><Glyph>B</Glyph></Cell>
                    <Cell $w={56}><Glyph $it $serif $s={36}>I</Glyph></Cell>
                    <Cell $w={56}><Glyph $deco="underline">U</Glyph></Cell>
                    <Cell $w={56}><Glyph $deco="line-through">S</Glyph></Cell>
                    <Cell $w={56}><Glyph $s={38} $thin>T</Glyph><Glyph $s={27} $thin>T</Glyph></Cell>
                    <VRule $ml={10} />
                  </FormatRow>
                  <FormatRow>
                    <Cell $w={70} $gap={12}><Glyph $s={30}>A</Glyph><Caret w={10} h={6} /></Cell>
                    <Cell $w={78} $gap={4}><HighlightA>A</HighlightA><Caret w={10} h={6} /></Cell>
                    <VRule />
                    <Cell $w={77} $gap={6}><AlignLines /><Caret w={10} h={6} /></Cell>
                    <Cell $w={56}><ListLines bullets /></Cell>
                    <Cell $w={56}><ListLines numbers /></Cell>
                    <Cell $w={56}><Indent out /></Cell>
                    <Cell $w={56}><Indent /></Cell>
                    <VRule $ml={9} />
                    <Cell $w={72}><LinkIcon /></Cell>
                    <VRule />
                  </FormatRow>
                  <FormatRow>
                    <Cell $w={54}><Glyph $s={31}>X<Sub>2</Sub></Glyph></Cell>
                    <Cell $w={58}><Glyph $s={31}>X<Top>2</Top></Glyph></Cell>
                    <VRule $ml={8} />
                    <Cell $w={72}><ClearFormat /></Cell>
                    <VRule />
                    <Cell $w={72}><PictureIcon c={SLATE} w={32} h={31} /></Cell>
                  </FormatRow>
                </FormatBox>
                <AnchorBox>
                  <AnchorHead><Chev s={18} /> Anclajes</AnchorHead>
                  <AnchorCard>Juan 15:8</AnchorCard>
                  <AddAnchor>+ Añadir anclaje</AddAnchor>
                </AnchorBox>
                <NoteText>
                  Una de las razones por las que Jesucristo<br />
                  quiere hacer discípulos que lleven fruto es<br />
                  para glorificar a su Padre.
                </NoteText>
                <TagFooter>
                  <TagInput>
                    Añadir etiquetas…
                    <TagAdd />
                  </TagInput>
                </TagFooter>
              </Editor>
            </Columns>
          </Sheet>
        </Column>
      </Shell>
    </>
  );
}

export default App;
